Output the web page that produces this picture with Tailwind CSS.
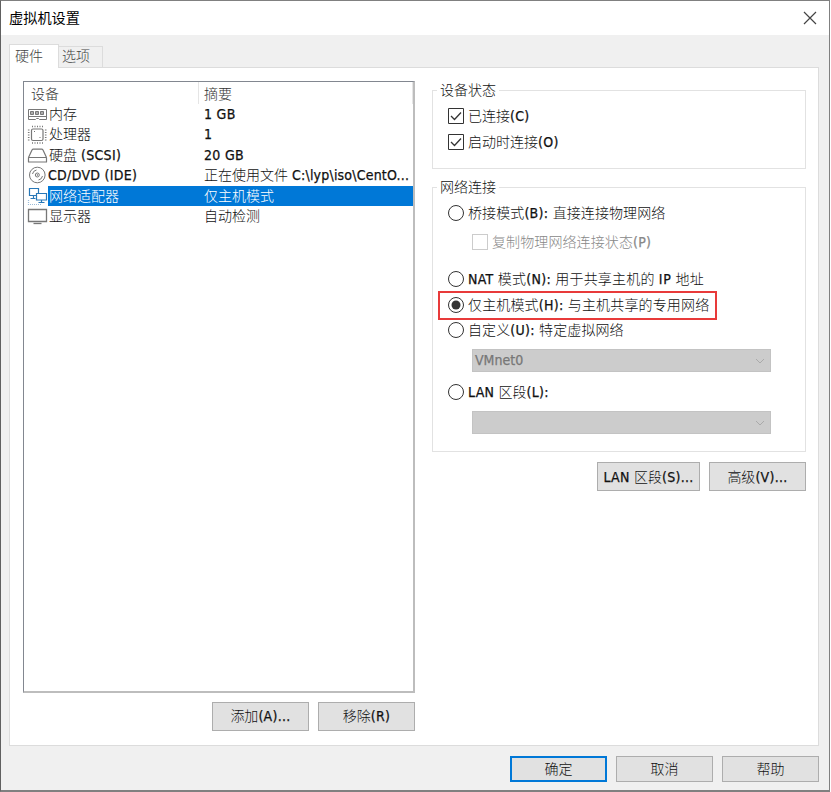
<!DOCTYPE html>
<html lang="zh-CN">
<head>
<meta charset="utf-8">
<title>虚拟机设置</title>
<script src="https://cdn.jsdelivr.net/npm/@tailwindcss/browser@4"></script>
</head>
<body class="bg-white overflow-hidden">
<div class="w-[830px] h-[792px] border border-[#808080] border-l-[#606060] border-b-2 bg-[#f0f0f0] flex flex-col font-['DejaVu_Sans_Condensed','Noto_Sans_CJK_SC',sans-serif] text-[14px] text-[#111] whitespace-nowrap [&_b]:font-normal [&_b]:tracking-[0.3px] [&_b]:[-webkit-text-stroke:0.25px]">
  <header class="h-[34px] shrink-0 bg-white flex items-center justify-between pl-2 pr-[12px]">
    <h1 class="text-[14.2px] leading-5 text-black -mt-px">虚拟机设置</h1>
    <svg width="14" height="14" viewBox="0 0 14 14" fill="none" stroke="#444" stroke-width="1.2"><path d="M1 1l12 12M13 1L1 13"/></svg>
  </header>

  <nav class="h-[32px] shrink-0 pl-2 pt-[9px] flex items-end text-[#444] font-light relative z-10">
    <div class="w-[50px] h-[24px] -mb-px bg-white border border-b-0 border-[#dcdcdc] pl-[5px] leading-[22px]">硬件</div>
    <div class="w-[44px] h-[21px] border border-l-0 border-b-0 border-[#dcdcdc] pl-[3px] leading-[19px]">选项</div>
  </nav>

  <main class="ml-2 w-[810px] h-[679px] shrink-0 bg-white border border-[#dcdcdc] flex">
    <section class="ml-[13px] mt-[13px] w-[392px]">
      <div class="h-[612px] border-2 border-[#bdbdbd] border-t border-l border-t-[#828790] border-l-[#828790]">
        <div class="flex h-[22px] leading-[24px] font-light text-[#333]">
          <div class="w-[175px] pl-[7px] border-r border-[#e5e5e5]">设备</div><div class="flex-1 pl-[5px] border-r border-[#e5e5e5]">摘要</div>
        </div>
        <div class="grid grid-cols-[24px_156px_1fr] auto-rows-[20.4px] leading-[21px]">
          <svg width="24" height="20" viewBox="0 0 24 20" fill="none" stroke="#777"><path d="M4.500 5.500h18v10h-7l-1-1h-2l-1 1h-7zM4 12.500h18"/><path d="M6.500 7.500h3v3h-3zM11.500 7.500h3v3h-3zM16.500 7.500h3v3h-3z" fill="#aaa"/></svg>
          <div class="font-light pl-px">内存</div><div><b>1 GB</b></div>

          <svg width="24" height="20" viewBox="0 0 24 20" fill="none" stroke="#777"><rect x="7.500" y="5" width="11.500" height="11.500" rx="1.500" stroke-width="1.200"/><path d="M8 2.500h11M8 19h11" stroke-dasharray="1 1.500" stroke-width="1.600"/><path d="M4.700 5.500v11M21.700 5.500v11" stroke-dasharray="1 1.500" stroke-width="1.600"/><path d="M10 7.500h1M15.500 13.500h1"/></svg>
          <div class="font-light pl-px">处理器</div><div><b>1</b></div>

          <svg width="24" height="20" viewBox="0 0 24 20" fill="none" stroke="#777" stroke-width="1.200"><path d="M4.500 12.500L8 5q.5-.8 1.300-.8h8.400q.8 0 1.300.8l3.500 7.500M4.500 12.500h18v4.500h-18z" stroke-linejoin="round"/></svg>
          <div class="pl-px"><span class="font-light">硬盘</span> <b>(SCSI)</b></div><div><b>20 GB</b></div>

          <svg width="24" height="20" viewBox="0 0 24 20" fill="none" stroke="#777"><circle cx="13.300" cy="10" r="7.800"/><circle cx="13.300" cy="10" r="2"/><circle cx="13.300" cy="10" r=".4"/><path d="M8.500 9a5 5 0 0 1 4-4M18.500 11a5 5 0 0 1-4 4"/></svg>
          <div><b>CD/DVD (IDE)</b></div><div><span class="font-light">正在使用文件</span> <b class="!tracking-[0.2px]">C:\lyp\iso\CentO...</b></div>

          <svg width="24" height="20" viewBox="0 0 24 20" fill="none" stroke="#2878b8" stroke-width="1.200"><path d="M5.500 2.500h9v7h-9zM9.500 9.500v3M6.500 12.500h5"/><path d="M12.500 7.500h10v6.500h-10z" fill="#fff"/><path d="M17.500 14v2.500M14.500 16.500h6"/><path d="M4.500 14v4.500h13" stroke="#9bbbd8" stroke-dasharray="1 1"/></svg>
          <div class="bg-[#0078d7] text-white font-light pl-px">网络适配器</div><div class="bg-[#0078d7] text-white font-light">仅主机模式</div>

          <svg width="24" height="20" viewBox="0 0 24 20" fill="none" stroke="#777" stroke-width="1.300"><path d="M4.500 3.500h18v12h-18z"/><path d="M9.500 17.500h8"/></svg>
          <div class="font-light pl-px">显示器</div><div class="font-light">自动检测</div>
        </div>
      </div>
      <div class="mt-[9px] flex justify-end gap-[9px]">
        <button class="w-[97px] h-[29px] bg-[#e1e1e1] border border-[#adadad] leading-[27px]"><span class="font-light">添加</span><b>(A)...</b></button>
        <button class="w-[97px] h-[29px] bg-[#e1e1e1] border border-[#adadad] leading-[27px]"><span class="font-light">移除</span><b>(R)</b></button>
      </div>
    </section>

    <section class="ml-[17px] w-[374px] pt-[22px] font-light">
      <div class="h-[79px] border border-[#e2e2e2]">
        <div class="-mt-[10px] ml-[4px] w-fit h-[19px] bg-white px-[3px] leading-[18px]">设备状态</div>
        <label class="mt-[3px] ml-[15px] h-[26px] flex items-center gap-[4px]"><svg width="16" height="16" viewBox="0 0 16 16" fill="none" stroke="#333"><path d="M.5.5h15v15H.5z"/><path d="M3 8l3.500 3.500L13 4.500" stroke-width="1.300"/></svg><span>已连接<b>(C)</b></span></label>
        <label class="ml-[15px] h-[26px] flex items-center gap-[4px]"><svg width="16" height="16" viewBox="0 0 16 16" fill="none" stroke="#333"><path d="M.5.5h15v15H.5z"/><path d="M3 8l3.500 3.500L13 4.500" stroke-width="1.300"/></svg><span>启动时连接<b>(O)</b></span></label>
      </div>

      <div class="mt-[18px] h-[265px] border border-[#e2e2e2]">
        <div class="-mt-[10px] ml-[4px] w-fit h-[19px] bg-white px-[3px] leading-[18px]">网络连接</div>
        <label class="mt-[3px] ml-[15px] h-[26px] flex items-center gap-[4px]"><svg width="16" height="16" fill="none" stroke="#333"><circle cx="8" cy="8" r="7.500"/></svg><span class="tracking-[0.1px]">桥接模式<b>(B): </b>直接连接物理网络</span></label>
        <label class="ml-[39px] mt-[2px] h-[28px] flex items-center gap-[4px] text-[#888]"><i class="size-[16px] border border-[#ccc]"></i><span class="tracking-[0.1px]">复制物理网络连接状态<b>(P)</b></span></label>
        <label class="mt-[10px] ml-[15px] h-[26px] flex items-center gap-[4px]"><svg width="16" height="16" fill="none" stroke="#333"><circle cx="8" cy="8" r="7.500"/></svg><span class="tracking-[0.2px]"><b>NAT </b>模式<b>(N): </b>用于共享主机的 <b class="!tracking-[0.6px]">IP</b> 地址</span></label>
        <div class="ml-[5px] w-[279px] h-[29px] -mt-px -mb-[3px] border-2 border-[#e83a3a] pl-[8px] flex items-center"><label class="flex items-center gap-[4px] -mt-px"><svg width="16" height="16" fill="none" stroke="#333"><circle cx="8" cy="8" r="7.500"/><circle cx="8" cy="8" r="4.500" fill="#333" stroke="none"/></svg><span class="tracking-[0.15px]">仅主机模式<b>(H): </b>与主机共享的专用网络</span></label></div>
        <label class="ml-[15px] h-[26px] flex items-center gap-[4px]"><svg width="16" height="16" fill="none" stroke="#333"><circle cx="8" cy="8" r="7.500"/></svg><span class="tracking-[0.1px]">自定义<b>(U): </b>特定虚拟网络</span></label>
        <div class="mt-[6px] ml-[39px] w-[299px] h-[23px] bg-[#ccc] border border-[#c3c3c3] flex items-center justify-between pl-[2px] pr-[5px] text-[#777]"><b class="!tracking-normal">VMnet0</b><svg width="10" height="6" fill="none" stroke="#aaa"><path d="M1 1l4 4 4-4"/></svg></div>
        <label class="mt-[7px] ml-[15px] h-[26px] flex items-center gap-[4px]"><svg width="16" height="16" fill="none" stroke="#333"><circle cx="8" cy="8" r="7.500"/></svg><span><b>LAN </b>区段<b>(L):</b></span></label>
        <div class="mt-[6px] ml-[39px] w-[299px] h-[23px] bg-[#ccc] border border-[#c3c3c3] flex items-center justify-end pr-[5px]"><svg width="10" height="6" fill="none" stroke="#aaa"><path d="M1 1l4 4 4-4"/></svg></div>
      </div>
      <div class="mt-[10px] flex justify-end gap-[9px]">
        <button class="w-[103px] h-[29px] bg-[#e1e1e1] border border-[#adadad] leading-[28px]"><b>LAN </b>区段<b>(S)...</b></button>
        <button class="w-[97px] h-[29px] bg-[#e1e1e1] border border-[#adadad] leading-[28px]">高级<b>(V)...</b></button>
      </div>
    </section>
  </main>

  <footer class="mt-[10px] flex justify-end gap-[9px] pr-[10px] font-light">
    <button class="w-[97px] h-[26px] bg-[#e1e1e1] border-2 border-[#0078d7] leading-[22px]">确定</button>
    <button class="w-[97px] h-[26px] bg-[#e1e1e1] border border-[#adadad] leading-[24px]">取消</button>
    <button class="w-[97px] h-[26px] bg-[#e1e1e1] border border-[#adadad] leading-[24px]">帮助</button>
  </footer>
</div>
</body>
</html>
